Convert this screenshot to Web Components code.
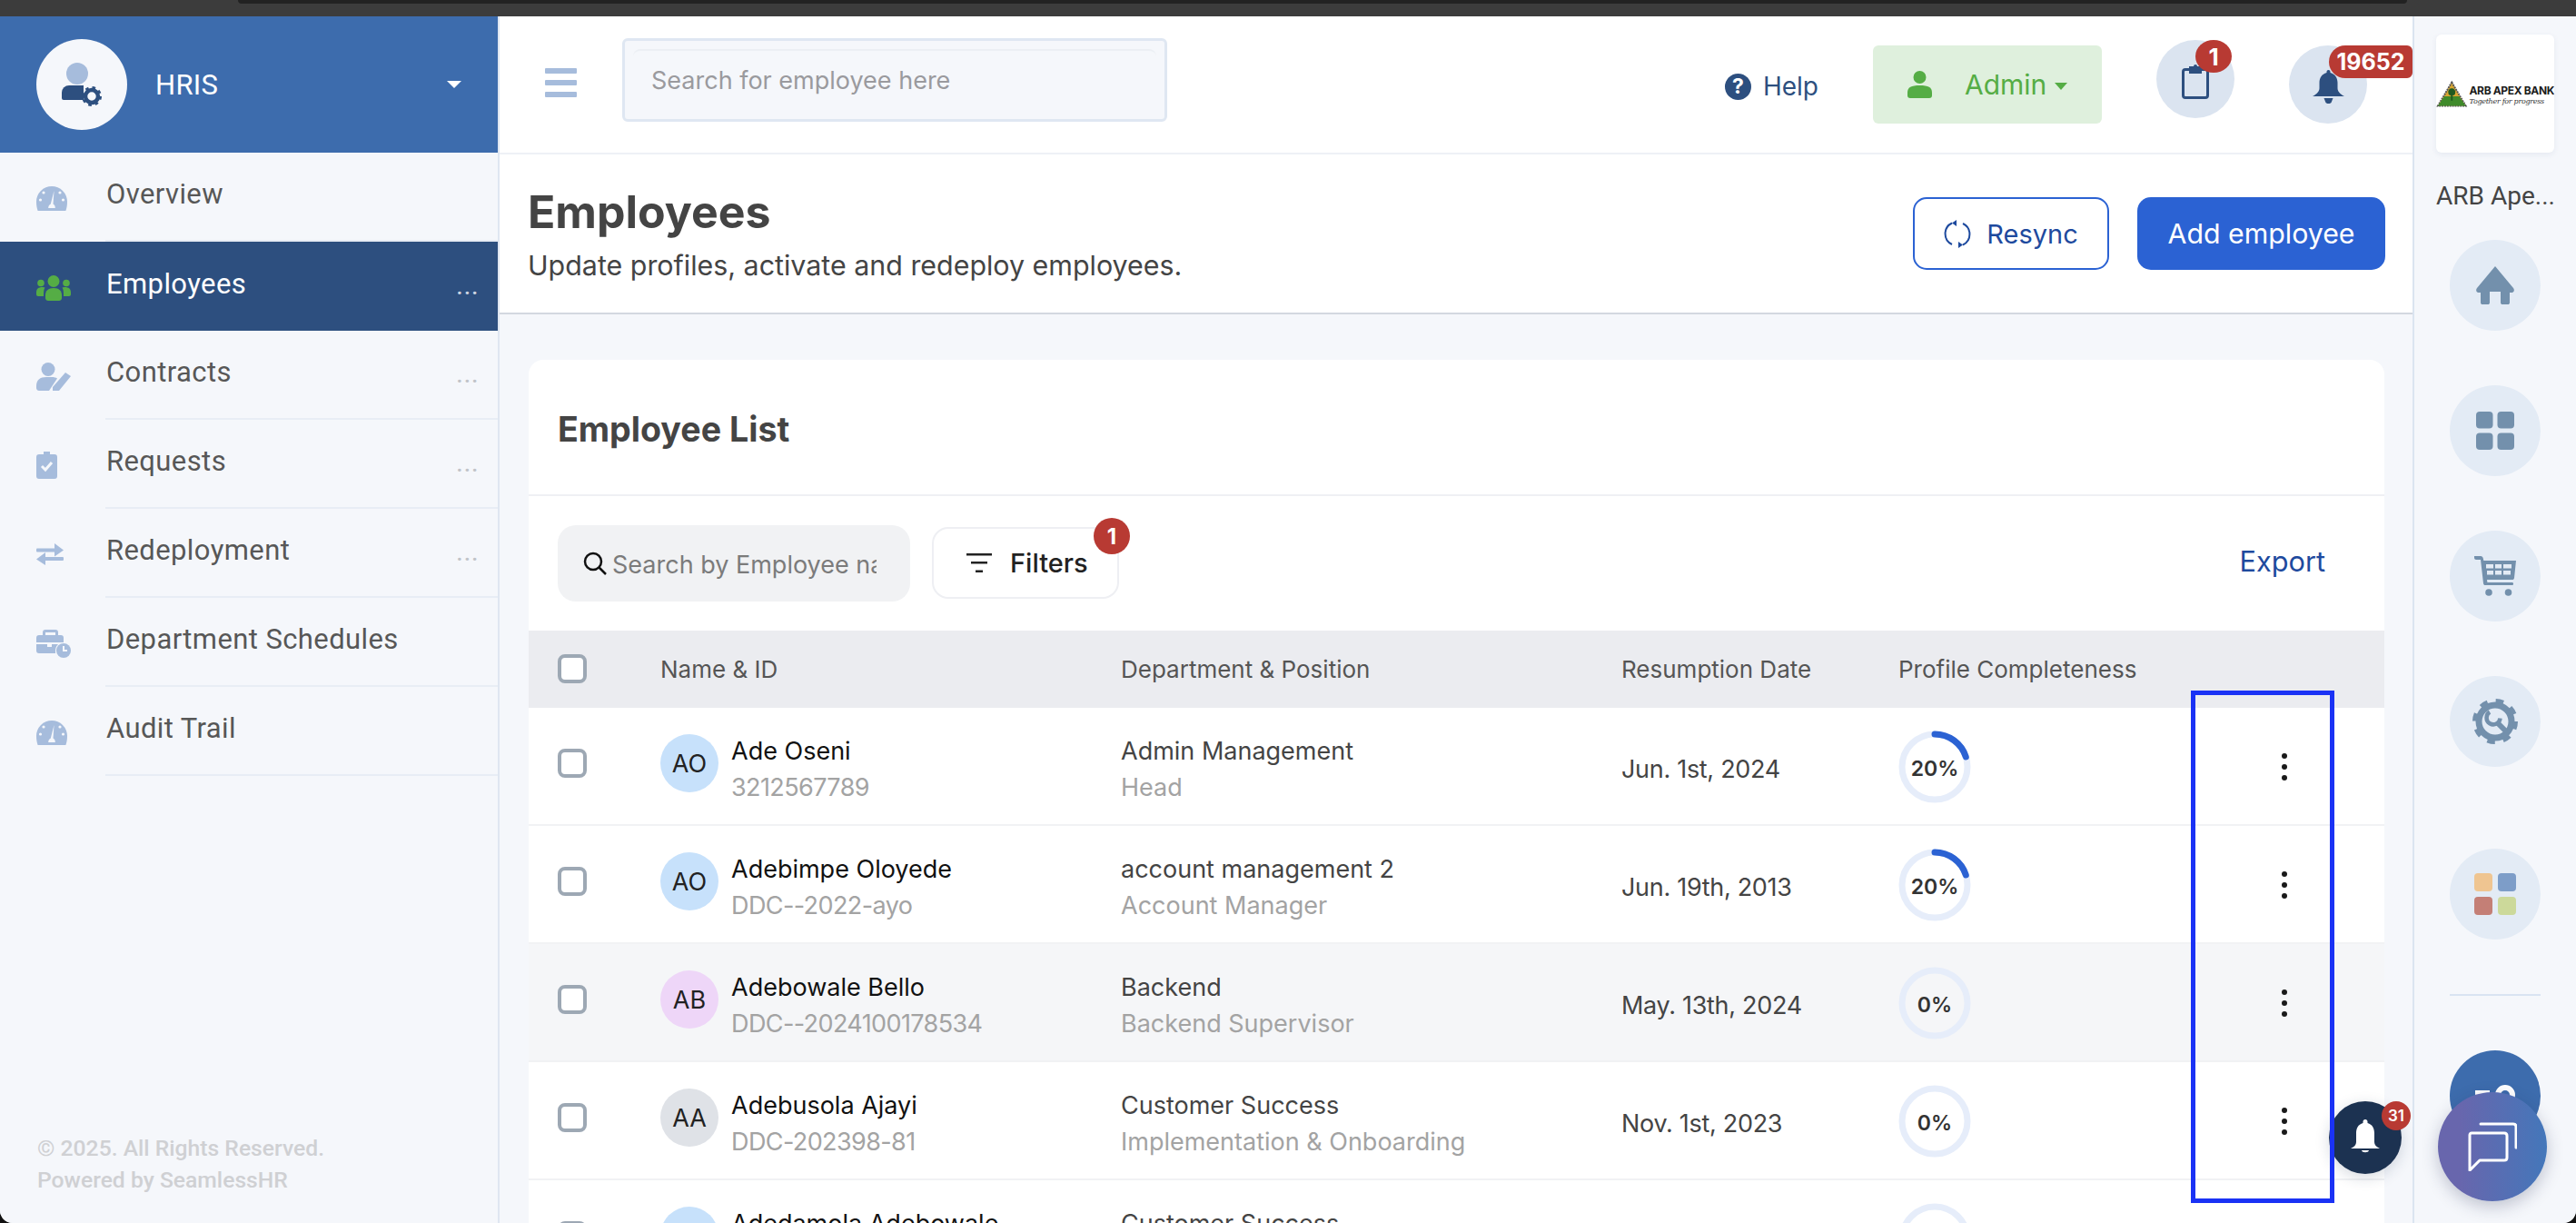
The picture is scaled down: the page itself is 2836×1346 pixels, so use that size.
<!DOCTYPE html>
<html>
<head>
<meta charset="utf-8">
<title>Employees</title>
<style>
    html, body { margin: 0; padding: 0; background: #111; }
    body { width: 2836px; height: 1346px; overflow: hidden; font-family: Inter, "Liberation Sans", sans-serif; }
</style>
</head>
<body>

<app-shell>
    <side-bar slot="side">
        <nav-item icon="gauge" label="Overview"></nav-item>
        <nav-item icon="group" label="Employees" active more></nav-item>
        <nav-item icon="contract" label="Contracts" more></nav-item>
        <nav-item icon="request" label="Requests" more></nav-item>
        <nav-item icon="swap" label="Redeployment" more></nav-item>
        <nav-item icon="schedule" label="Department Schedules"></nav-item>
        <nav-item icon="gauge" label="Audit Trail"></nav-item>
    </side-bar>

    <top-bar slot="main"></top-bar>
    <page-head slot="main"></page-head>
    <employee-card slot="main">
        <emp-row initials="AO" tone="#c7e1fb" name="Ade Oseni" code="3212567789" dept="Admin Management" role="Head" date="Jun. 1st, 2024" pct="20"></emp-row>
        <emp-row initials="AO" tone="#c7e1fb" name="Adebimpe Oloyede" code="DDC--2022-ayo" dept="account management 2" role="Account Manager" date="Jun. 19th, 2013" pct="20"></emp-row>
        <emp-row initials="AB" tone="#eed6f8" name="Adebowale Bello" code="DDC--2024100178534" dept="Backend" role="Backend Supervisor" date="May. 13th, 2024" pct="0" alt></emp-row>
        <emp-row initials="AA" tone="#dfe2e7" name="Adebusola Ajayi" code="DDC-202398-81" dept="Customer Success" role="Implementation &amp; Onboarding" date="Nov. 1st, 2023" pct="0"></emp-row>
        <emp-row initials="AA" tone="#c7e1fb" name="Adedamola Adebowale" code="DDC-202398-82" dept="Customer Success" role="Implementation &amp; Onboarding" date="Nov. 1st, 2023" pct="0"></emp-row>
    </employee-card>

    <right-rail slot="rail"></right-rail>

    <float-buttons slot="over"></float-buttons>
</app-shell>

<script>
const BLUE = '#a6bcdc';
const NAVY = '#2d4f7f';

// sidebar + rail icons, all inline svg
const icons = {
    gauge: `<svg width="34" height="27" viewBox="0 0 34 27"><path fill="currentColor" d="M17 0a17 17 0 0 1 17 17c0 4-.6 7-1.6 10H1.6C.6 24 0 21 0 17A17 17 0 0 1 17 0z"/><path fill="#f5f7fb" d="M19.5 5l-1 14.5c2 1 2.300 3 2.300 4.500h-7.600c0-1.500.5-3.500 2.600-4.500z"/><circle cx="8" cy="7" r="1.600" fill="#f5f7fb"/><circle cx="4.500" cy="15" r="1.600" fill="#f5f7fb"/><circle cx="26" cy="7" r="1.600" fill="#f5f7fb"/><circle cx="29.500" cy="15" r="1.600" fill="#f5f7fb"/></svg>`,
    group: `<svg width="38" height="28" viewBox="0 0 38 28" fill="currentColor"><circle cx="19" cy="6.500" r="6.500"/><path d="M10 22c0-5 3-8 9-8s9 3 9 8v3c0 2-1.500 3-3 3H13c-1.500 0-3-1-3-3z"/><circle cx="5" cy="8.500" r="3.800"/><circle cx="33" cy="8.500" r="3.800"/><path d="M0 19c0-4 2-6 7-6 1 0 2 .2 2.500.5C8 15.500 8 19 8 23H2c-1.200 0-2-.8-2-2z"/><path d="M38 19c0-4-2-6-7-6-1 0-2 .2-2.500.5 1.500 2 1.500 5.500 1.500 9.500h6c1.200 0 2-.8 2-2z"/></svg>`,
    contract: `<svg width="38" height="31" viewBox="0 0 38 31" fill="currentColor"><circle cx="13" cy="7.500" r="7.500"/><path d="M0 26c0-7 4-10 11-10h6c2.500 0 4.500.5 6 1.500L14 31H3c-2 0-3-1.500-3-3z"/><path d="M32 11l6 4-13 16-7 0 0-4z"/></svg>`,
    request: `<svg width="23" height="30" viewBox="0 0 23 30"><path fill="currentColor" d="M8 0h7v3h5c2 0 3 1 3 3v21c0 2-1 3-3 3H3c-2 0-3-1-3-3V6c0-2 1-3 3-3h5z"/><path fill="none" stroke="#f5f7fb" stroke-width="3" d="M6 16l4 4 7-8"/></svg>`,
    swap: `<svg width="30" height="24" viewBox="0 0 30 24" fill="currentColor"><rect x="0" y="5.500" width="22" height="4" rx="1"/><path d="M20 0l10 7.500-10 7z"/><rect x="8" y="15" width="22" height="4" rx="1"/><path d="M10 10l-10 7.500 10 6.500z"/></svg>`,
    schedule: `<svg width="38" height="31" viewBox="0 0 38 31"><path fill="currentColor" d="M10 0h11c2 0 3 1 3 3v3h3c2 0 3 1 3 3v5H0V9c0-2 1-3 3-3h4V3c0-2 1-3 3-3zm0 3v3h11V3z"/><path fill="currentColor" d="M0 16h12v3h5v-3h7c-2 2-3 4-3 8v2H3c-2 0-3-1-3-3z"/><circle cx="30" cy="23" r="8" fill="currentColor"/><path d="M30 18v5h4" fill="none" stroke="#f5f7fb" stroke-width="2"/></svg>`,
    home: `<svg width="44" height="42" viewBox="0 0 44 42" fill="currentColor"><path d="M22 0l20 24c2 3 0 5-2 5h-2v11c0 1.500-1 2-2 2h-6c-1 0-2-.5-2-2V28H16v12c0 1.500-1 2-2 2H8c-1 0-2-.5-2-2V29H4c-2 0-4-2-2-5z"/></svg>`,
    grid: `<svg width="42" height="42" viewBox="0 0 42 42" fill="currentColor"><rect width="18.500" height="18.500" rx="4"/><rect x="23.500" width="18.500" height="18.500" rx="4"/><rect y="23.500" width="18.500" height="18.500" rx="4"/><rect x="23.500" y="23.500" width="18.500" height="18.500" rx="4"/></svg>`,
    cart: `<svg width="46" height="44" viewBox="0 0 46 44"><path fill="currentColor" d="M0 0h7c1.500 0 2.500 1 2.800 2.500l.5 2.500H46l-2 19c-.2 1.500-1 2-2 2H14l.4 3h27.100c1 0 1.500.5 1.500 1.500S42.500 32 41.500 32H12c-1 0-1.800-.5-2-2L7 4H2C1 4 0 3 0 2z"/><circle cx="16" cy="40" r="3.800" fill="currentColor"/><circle cx="37.500" cy="40" r="3.800" fill="currentColor"/><g fill="#e3ebf5"><rect x="13" y="9" width="8" height="4.500"/><rect x="23" y="9" width="7" height="4.500"/><rect x="32" y="9" width="9" height="4.500"/><rect x="14" y="16" width="7" height="4.500"/><rect x="23" y="16" width="7" height="4.500"/><rect x="32" y="16" width="8" height="4.500"/></g></svg>`,
    gear: `<svg width="50" height="50" viewBox="0 0 50 50" fill="none" stroke="currentColor"><circle cx="25" cy="25" r="18" stroke-width="7"/><circle cx="25" cy="25" r="22.500" stroke-width="5" stroke-dasharray="8.500 9.170"/><path d="M26.500 25.500L37 36" stroke-width="6"/><path d="M19 14.500a7.500 7.500 0 1 0 11.500 7" stroke-width="4.500"/></svg>`
};

const gearSmall = `<svg width="22" height="22" viewBox="0 0 22 22" style="display:block"><circle cx="11" cy="11" r="7" fill="none" stroke="${NAVY}" stroke-width="4.500"/><circle cx="11" cy="11" r="9.500" fill="none" stroke="${NAVY}" stroke-width="3" stroke-dasharray="3.500 4"/></svg>`;


const shellTemplate = document.createElement('template');
shellTemplate.innerHTML = `
    <style>
        :host { display: block; position: relative; width: 2836px; height: 1346px; overflow: hidden;
                border-radius: 0 0 14px 14px; background: #f5f7fb; }
        .strip { height: 18px; background: #3c3c3c; position: relative; }
        .strip::before { content: ''; position: absolute; left: 262px; right: 186px; top: 0; height: 4px;
                background: #222; border-radius: 0 0 8px 8px; }
        .body { display: flex; height: 1328px; }
        .side { flex: 0 0 550px; display: flex; }
        .main { flex: 0 0 2106px; display: flex; flex-direction: column; overflow: hidden; background: #f5f7fb; }
        .rail { flex: 0 0 180px; display: flex; }
    </style>
    <div class="strip"></div>
    <div class="body">
        <div class="side"><slot name="side"></slot></div>
        <div class="main"><slot name="main"></slot></div>
        <div class="rail"><slot name="rail"></slot></div>
    </div>
    <slot name="over"></slot>
`;

class AppShell extends HTMLElement {
    constructor () {
        super();
        this.attachShadow({ mode: 'open' });
        this.shadowRoot.appendChild(shellTemplate.content.cloneNode(true));
    }
}
customElements.define('app-shell', AppShell);


const sideTemplate = document.createElement('template');
sideTemplate.innerHTML = `
    <style>
        :host { display: flex; flex-direction: column; width: 550px; box-sizing: border-box;
                background: #f5f7fb; border-right: 2px solid #dfe6f1; font-family: Roboto, sans-serif; }
        .brand { height: 150px; background: #3d6cad; display: flex; align-items: center; padding-left: 40px; color: #fff; }
        .avatar { width: 100px; height: 100px; border-radius: 50%; background: #f5f7fb; position: relative; flex: none; }
        .head { position: absolute; left: 33px; top: 26px; width: 24px; height: 24px; border-radius: 50%; background: ${BLUE}; }
        .bust { position: absolute; left: 28px; top: 51px; width: 24px; height: 16px; border-radius: 8px 0 0 2px; background: ${NAVY}; }
        .gear { position: absolute; left: 50px; top: 52px; }
        .name { margin-left: 31px; font-size: 31px; font-weight: 400; letter-spacing: .3px; }
        .caret { margin-left: auto; margin-right: 40px; width: 0; height: 0;
                border-left: 8px solid transparent; border-right: 8px solid transparent; border-top: 8px solid #fff; }
        .foot { margin-top: auto; padding: 0 0 30px 41px; color: #cfd0d3; font-size: 24.700px; font-weight: 500; line-height: 35px; }
    </style>
    <div class="brand">
        <div class="avatar">
            <span class="head"></span><span class="bust"></span>
            <span class="gear">${gearSmall}</span>
        </div>
        <span class="name">HRIS</span>
        <span class="caret"></span>
    </div>
    <slot></slot>
    <div class="foot">© 2025. All Rights Reserved.<br>Powered by SeamlessHR</div>
`;

class SideBar extends HTMLElement {
    constructor () {
        super();
        this.attachShadow({ mode: 'open' });
        this.shadowRoot.appendChild(sideTemplate.content.cloneNode(true));
    }
}
customElements.define('side-bar', SideBar);


class NavItem extends HTMLElement {
    constructor () {
        super();
        this.attachShadow({ mode: 'open' });
    }

    connectedCallback () {
        const active = this.hasAttribute('active');
        this.shadowRoot.innerHTML = `
            <style>
                :host { display: block; height: 98px; position: relative; }
                .row { height: 96px; display: flex; align-items: center; color: ${active ? '#fff' : '#575757'};
                       background: ${active ? NAVY : 'transparent'}; font-size: 31px; letter-spacing: .4px; }
                :host([active]) .row { height: 98px; }
                .ic { flex: 0 0 117px; padding-left: 40px; box-sizing: border-box; height: 40px; display: flex;
                      align-items: center; color: ${active ? '#55ad45' : BLUE}; }
                .ic svg { margin-top: 4px; }
                .txt { margin-top: -6px; }
                .more { margin-left: auto; margin-right: 20px; margin-top: 2px; font-size: 22px; font-weight: 700; letter-spacing: 2px;
                        color: ${active ? '#cfd6e2' : '#c0c3c8'}; }
                .line { margin-left: 116px; height: 2px; background: #e8edf5; }
                :host([active]) .line { display: none; }
            </style>
            <div class="row">
                <span class="ic">${icons[this.getAttribute('icon')]}</span>
                <span class="txt">${this.getAttribute('label')}</span>
                ${this.hasAttribute('more') ? '<span class="more">...</span>' : ''}
            </div>
            <div class="line"></div>
        `;
    }
}
customElements.define('nav-item', NavItem);


const topTemplate = document.createElement('template');
topTemplate.innerHTML = `
    <style>
        :host { display: flex; align-items: flex-start; flex: 0 0 152px; height: 152px; box-sizing: border-box; background: #fff;
                border-bottom: 2px solid #eef1f6; padding-right: 50px; }
        .burger { margin: 57px 0 0 50px; width: 35px; display: flex; flex-direction: column; gap: 7px; }
        .burger i { display: block; height: 6px; border-radius: 1px; background: ${BLUE}; }
        .search { margin: 24px 0 0 50px; width: 600px; height: 92px; box-sizing: border-box; border: 3px solid #dfe7f2; border-radius: 6px;
                  background: #f5f7fb; padding: 9px 9px 0; }
        .search div { height: 60px; border-top: 2px solid #eceff4; border-radius: 8px; padding-left: 20px;
                  line-height: 66px; font-size: 27px; color: #9a9a9e; }
        .right { margin-left: auto; display: flex; align-items: flex-start; }
        .help { margin-top: 60px; display: flex; align-items: center; gap: 13px; color: ${NAVY}; font-size: 28px; }
        .help b { width: 29px; height: 29px; border-radius: 50%; background: ${NAVY}; color: #fff; font-size: 23px;
                  display: flex; align-items: center; justify-content: center; }
        .admin { margin: 32px 0 0 60px; width: 252px; height: 86px; border-radius: 6px; background: #dff0dd; color: #55ad45;
                 display: flex; align-items: center; font-size: 30px; padding-left: 38px; box-sizing: border-box; }
        .admin svg { margin-right: 36px; }
        .admin i { margin-left: 9px; margin-top: 4px; width: 0; height: 0; border-left: 7.500px solid transparent; border-right: 7.500px solid transparent;
                 border-top: 8px solid #55ad45; }
        .circle { position: relative; width: 86px; height: 86px; border-radius: 50%; background: #dbe4f0;
                  display: flex; align-items: center; justify-content: center; }
        .clip { margin: 26px 0 0 60px; }
        .bell { margin: 32px 0 0 60px; }
        .badge { position: absolute; background: #b83a33; color: #fff; font-weight: 700; display: flex; align-items: center;
                 justify-content: center; font-size: 26px; }
        .clip .badge { left: 43px; top: 0; width: 40px; height: 36px; border-radius: 50%; }
        .bell .badge { left: 44px; top: 0; width: 92px; height: 36px; border-radius: 18px 6px 6px 18px; font-size: 25px; }
    </style>
    <div class="burger"><i></i><i></i><i></i></div>
    <div class="search"><div>Search for employee here</div></div>
    <div class="right">
        <div class="help"><b>?</b><span>Help</span></div>
        <div class="admin">
            <svg width="27" height="30" viewBox="0 0 27 30" fill="currentColor"><circle cx="13.500" cy="7" r="7"/><path d="M0 24c0-6 4-8 13.500-8S27 18 27 24v3c0 2-1 3-3 3H3c-2 0-3-1-3-3z"/></svg>
            <span>Admin</span><i></i>
        </div>
        <div class="circle clip">
            <svg width="30" height="39" viewBox="0 0 30 39" style="margin-top:4px"><rect x="1.500" y="6.500" width="27" height="31" rx="2.500" fill="none" stroke="${NAVY}" stroke-width="3"/><path fill="${NAVY}" d="M8 3h5a2 2 0 0 1 4 0h5v8H8z"/></svg>
            <span class="badge">1</span>
        </div>
        <div class="circle bell">
            <svg width="35" height="37" viewBox="0 0 35 37" fill="${NAVY}" style="margin-top:5px"><path d="M17.500 0c1.500 0 2 1 2 2v1c5.500 1.500 8 6 8 11v6c0 3 2 6 7.500 9H0c5.500-3 7.500-6 7.500-9v-6c0-5 2.500-9.500 8-11V2c0-1 .5-2 2-2z"/><path d="M12.500 31h10l-2 5c-1 1.500-5 1.500-6 0z"/></svg>
            <span class="badge">19652</span>
        </div>
    </div>
`;

class TopBar extends HTMLElement {
    constructor () {
        super();
        this.attachShadow({ mode: 'open' });
        this.shadowRoot.appendChild(topTemplate.content.cloneNode(true));
    }
}
customElements.define('top-bar', TopBar);


const headTemplate = document.createElement('template');
headTemplate.innerHTML = `
    <style>
        :host { display: flex; align-items: center; flex: 0 0 176px; height: 176px; box-sizing: border-box; background: #fff;
                border-bottom: 2px solid #d3d8e0; padding: 0 30px 0 31px; }
        .txt { flex: 1; }
        h1 { margin: 0; font-size: 50px; line-height: 60px; font-weight: 700; color: #444; }
        p { margin: 9px 0 0; font-size: 30.400px; line-height: 40px; color: #444; }
        button { font: inherit; font-size: 29px; height: 80px; box-sizing: border-box; cursor: pointer; }
        .sync { width: 216px; border: 2px solid #2b62d3; border-radius: 15px; background: #fff; color: #1e4a9e;
                display: flex; align-items: center; justify-content: center; gap: 17px; }
        .add { width: 273px; margin-left: 31px; border: 0; border-radius: 15px; background: #2b62d3; color: #fff; font-size: 30.300px; }
    </style>
    <div class="txt">
        <h1>Employees</h1>
        <p>Update profiles, activate and redeploy employees.</p>
    </div>
    <button class="sync">
        <svg width="30" height="33" viewBox="0 0 30 33" fill="none" stroke="#1e4a9e" stroke-width="2"><path d="M9 4.500A13 13 0 0 0 9 28"/><path d="M21 28.500A13 13 0 0 0 21 5"/><path fill="#1e4a9e" d="M14 1v7l-5-3.500zM16 32v-7l5 3.500z" stroke="none"/></svg>
        Resync
    </button>
    <button class="add">Add employee</button>
`;

class PageHead extends HTMLElement {
    constructor () {
        super();
        this.attachShadow({ mode: 'open' });
        this.shadowRoot.appendChild(headTemplate.content.cloneNode(true));
    }
}
customElements.define('page-head', PageHead);


const cardTemplate = document.createElement('template');
cardTemplate.innerHTML = `
    <style>
        :host { display: block; margin: 50px 31px 0 32px; background: #fff; border-radius: 16px 16px 0 0; flex: 0 0 auto; }
        h2 { margin: 0; height: 150px; box-sizing: border-box; border-bottom: 2px solid #eff0f4; padding: 5px 0 0 32px;
             display: flex; align-items: center; font-size: 37.600px; font-weight: 700; color: #444; }
        .tools { height: 148px; box-sizing: border-box; padding: 32px 65px 0 32px; display: flex; align-items: flex-start; }
        .find { width: 388px; height: 84px; box-sizing: border-box; border-radius: 20px; background: #f1f2f4; padding-left: 28px;
                display: flex; align-items: center; gap: 6px; }
        .find span { display: block; width: 291px; overflow: hidden; white-space: nowrap; font-size: 27px; color: #7b7b7b; padding-top: 2px; }
        .filters { position: relative; margin: 2px 0 0 24px; width: 206px; height: 79px; box-sizing: border-box;
                border: 2px solid #eeeff3; border-radius: 18px; display: flex; align-items: center; padding-left: 36px; gap: 20px;
                font-size: 29px; font-weight: 500; color: #222; }
        .filters i { position: absolute; left: 176px; top: -12px; width: 40px; height: 40px; border-radius: 50%; background: #b83a33;
                color: #fff; font-style: normal; font-weight: 700; font-size: 24px; display: flex; align-items: center; justify-content: center; }
        .export { margin: 21px 0 0 auto; font-size: 30.700px; color: #1e4a9e; }
        .cols { height: 85px; background: #ebecf0; font-size: 26px; color: #555; }
        .grid { display: grid; grid-template-columns: 113px 507px 551px 305px 1fr; align-items: center; padding-left: 32px; }
        .box { width: 32px; height: 32px; box-sizing: border-box; border: 4px solid #9da8b4; border-radius: 8px; background: #fff; margin-top: -1px; }
    </style>
    <h2>Employee List</h2>
    <div class="tools">
        <div class="find">
            <svg width="26" height="26" viewBox="0 0 26 26" fill="none" stroke="#111" stroke-width="2.500"><circle cx="11" cy="11" r="9"/><path d="M17.500 17.500L25 25"/></svg>
            <span>Search by Employee name</span>
        </div>
        <div class="filters">
            <svg width="28" height="22" viewBox="0 0 28 22" fill="#222"><rect width="28" height="2.500"/><rect x="5" y="9" width="18" height="2.500"/><rect x="10" y="18.500" width="8" height="2.500"/></svg>
            <span>Filters</span><i>1</i>
        </div>
        <span class="export">Export</span>
    </div>
    <div class="cols grid">
        <div class="box"></div><span>Name &amp; ID</span><span>Department &amp; Position</span><span>Resumption Date</span><span>Profile Completeness</span>
    </div>
    <slot></slot>
`;

class EmployeeCard extends HTMLElement {
    constructor () {
        super();
        this.attachShadow({ mode: 'open' });
        this.shadowRoot.appendChild(cardTemplate.content.cloneNode(true));
    }
}
customElements.define('employee-card', EmployeeCard);


class EmpRow extends HTMLElement {
    constructor () {
        super();
        this.attachShadow({ mode: 'open' });
    }

    connectedCallback () {
        const attr = (n) => this.getAttribute(n);
        const len = 2 * Math.PI * 36;
        const pct = Number(attr('pct'));
        this.shadowRoot.innerHTML = `
            <style>
                :host { display: grid; grid-template-columns: 113px 507px 551px 305px 1fr; align-items: center; padding-left: 32px;
                        height: 130px; box-sizing: border-box; border-bottom: 2px solid #f1f2f4; background: #fff; position: relative; }
                :host([alt]) { background: #f5f6f8; }
                .box { width: 32px; height: 32px; box-sizing: border-box; border: 4px solid #9da8b4; border-radius: 8px; background: #fff; margin-top: -6px; }
                .who { display: flex; align-items: center; margin-top: -6px; }
                .av { flex: 0 0 64px; height: 64px; border-radius: 50%; display: flex; align-items: center; justify-content: center;
                      background: ${attr('tone')}; font-size: 27px; color: #222; margin-right: 14px; }
                .two { line-height: 40px; font-size: 27px; margin-top: 8px; }
                .who .two { margin-top: 14px; }
                .a { color: #111; }
                .dep { color: #444; }
                .b { color: #a3a3a3; }
                .code { letter-spacing: -.6px; }
                .date { font-size: 27px; color: #444; margin-top: 6px; letter-spacing: -.3px; }
                .ring { position: relative; width: 80px; height: 80px; margin-top: 2px; }
                .ring span { position: absolute; inset: 0; display: flex; align-items: center; justify-content: center;
                             font-size: 23px; font-weight: 600; color: #333; padding-top: 4px; }
                .dots { position: absolute; left: 1930px; top: 50px; display: flex; flex-direction: column; gap: 6px; }
                .dots i { display: block; width: 6px; height: 6px; border-radius: 50%; background: #1a1a1a; }
            </style>
            <div class="box"></div>
            <div class="who">
                <span class="av">${attr('initials')}</span>
                <div class="two"><div class="a">${attr('name')}</div><div class="b code">${attr('code')}</div></div>
            </div>
            <div class="two"><div class="dep">${attr('dept')}</div><div class="b">${attr('role')}</div></div>
            <div class="date">${attr('date')}</div>
            <div class="ring">
                <svg width="80" height="80" viewBox="0 0 80 80">
                    <circle cx="40" cy="40" r="36" fill="none" stroke="#e6edfa" stroke-width="7"/>
                    ${pct ? `<circle cx="40" cy="40" r="36" fill="none" stroke="#2b62d3" stroke-width="7" stroke-linecap="round"
                        stroke-dasharray="${len * pct / 100} ${len}" transform="rotate(-90 40 40)"/>` : ''}
                </svg>
                <span>${pct}%</span>
            </div>
            <div class="dots"><i></i><i></i><i></i></div>
        `;
    }
}
customElements.define('emp-row', EmpRow);


const railTemplate = document.createElement('template');
railTemplate.innerHTML = `
    <style>
        :host { display: flex; flex-direction: column; width: 180px; box-sizing: border-box; background: #f5f7fb;
                border-left: 2px solid #dbe4f0; padding: 20px 0 0 24px; font-family: Roboto, sans-serif; }
        .logo { width: 130px; height: 130px; background: #fff; border-radius: 6px; box-shadow: 0 2px 6px rgba(40, 70, 120, .08);
                display: flex; align-items: center; gap: 2px; padding-top: 2px; box-sizing: border-box; overflow: hidden; flex: none; }
        .logo b { display: block; font: 700 12px/14px Inter, sans-serif; color: #1c1c1c; white-space: nowrap; letter-spacing: -.35px; }
        .logo em { display: block; font: italic 8px/9px "DejaVu Serif", serif; color: #333; white-space: nowrap; letter-spacing: -.3px; }
        .label { margin-top: 28px; height: 40px; line-height: 40px; font-size: 28px; color: #444; width: 130px; overflow: hidden; white-space: nowrap; flex: none; }
        .btn { margin: 0 0 60px 15px; width: 100px; height: 100px; border-radius: 50%; background: #e3ebf5; color: #7390ac;
               display: flex; align-items: center; justify-content: center; flex: none; }
        .label + .btn { margin-top: 28px; }
        .btn svg { display: block; }
        .apps { display: grid; grid-template-columns: 20px 20px; gap: 6px; align-content: center; justify-content: center; }
        .apps i { width: 20px; height: 20px; border-radius: 4px; }
        hr { margin: 60px 0 0 15px; width: 100px; height: 2px; border: 0; background: #d9e4f2; flex: none; }
        .help { margin: 60px 0 0 15px; width: 100px; height: 100px; border-radius: 50%; background: #3d6cad; flex: none; }
    </style>
    <div class="logo">
        <svg width="36" height="32" viewBox="0 0 36 32">
            <path d="M18 2L34 29H2z" fill="#d8a531" stroke="#555" stroke-width="2" stroke-dasharray="2 1"/>
            <path d="M9.500 18h17L34 29H2z" fill="#3f8a2a"/>
            <path d="M18 9a4 4 0 0 1 4 5 3 3 0 0 1-3 3v6h-2v-6a3 3 0 0 1-3-3 4 4 0 0 1 4-5z" fill="#1f5a20"/>
        </svg>
        <div><b>ARB APEX BANK</b><em>Together for progress</em></div>
    </div>
    <div class="label">ARB Ape...</div>
    <div class="btn">${icons.home}</div>
    <div class="btn">${icons.grid}</div>
    <div class="btn">${icons.cart}</div>
    <div class="btn" style="margin-bottom:0">${icons.gear}</div>
    <div class="btn apps" style="margin-top:90px;margin-bottom:0">
        <i style="background:#efc591"></i><i style="background:#7d9dc8"></i>
        <i style="background:#c47f76"></i><i style="background:#ccd99a"></i>
    </div>
    <hr>
    <div class="help">
        <svg width="100" height="100" viewBox="0 0 100 100" fill="none"><rect x="28" y="44" width="16" height="5" fill="#fff"/><rect x="28" y="52" width="10" height="5" fill="#fff"/><circle cx="61" cy="49" r="8" stroke="#fff" stroke-width="6"/></svg>
    </div>
`;

class RightRail extends HTMLElement {
    constructor () {
        super();
        this.attachShadow({ mode: 'open' });
        this.shadowRoot.appendChild(railTemplate.content.cloneNode(true));
    }
}
customElements.define('right-rail', RightRail);


// things lying over the page: the floating buttons and the annotation box
const floatTemplate = document.createElement('template');
floatTemplate.innerHTML = `
    <style>
        :host { display: block; position: absolute; inset: 0; pointer-events: none; }
        .bell { position: absolute; left: 2564px; top: 1212px; width: 80px; height: 80px; border-radius: 50%; background: #1c3251;
                display: flex; align-items: center; justify-content: center; box-shadow: 0 4px 16px rgba(28, 50, 81, .18); }
        .bell i { position: absolute; left: 58px; top: 0; width: 32px; height: 32px; border-radius: 50%; background: #b83a33; color: #fff;
                font-style: normal; font-weight: 600; font-size: 17px; display: flex; align-items: center; justify-content: center; }
        .chat { position: absolute; left: 2684px; top: 1202px; width: 120px; height: 120px; border-radius: 50%;
                background: linear-gradient(90deg, #6866ad 20%, #4477ba 100%); box-shadow: 0 6px 18px rgba(30, 40, 80, .25);
                display: flex; align-items: center; justify-content: center; }
        .mark { position: absolute; left: 2412px; top: 760px; width: 158px; height: 564px; box-sizing: border-box; border: 5px solid #1a32f5; }
    </style>
    <div class="bell">
        <svg width="32" height="40" viewBox="0 0 32 40" fill="#fff"><path d="M16 0c1.500 0 2.500 1 2.500 2.500V4C24 5.500 26 10 26 15v10c0 3 2 5 6 7H0c4-2 6-4 6-7V15C6 10 8 5.500 13.500 4V2.500C13.500 1 14.500 0 16 0z"/><path d="M12 34h8c-.5 3-7.500 3-8 0z"/></svg>
        <i>31</i>
    </div>
    <div class="chat">
        <svg width="54" height="54" viewBox="0 0 54 54" fill="none" stroke="#fff" stroke-width="3" stroke-linecap="round" stroke-linejoin="round"><path d="M14 2h36c2 0 3 1 3 3v23"/><path d="M4 12h36c2 0 3 1 3 3v24c0 2-1 3-3 3H13L2 53V14c0-1 1-2 2-2z"/></svg>
    </div>
    <div class="mark"></div>
`;

class FloatButtons extends HTMLElement {
    constructor () {
        super();
        this.attachShadow({ mode: 'open' });
        this.shadowRoot.appendChild(floatTemplate.content.cloneNode(true));
    }
}
customElements.define('float-buttons', FloatButtons);
</script>
</body>
</html>
